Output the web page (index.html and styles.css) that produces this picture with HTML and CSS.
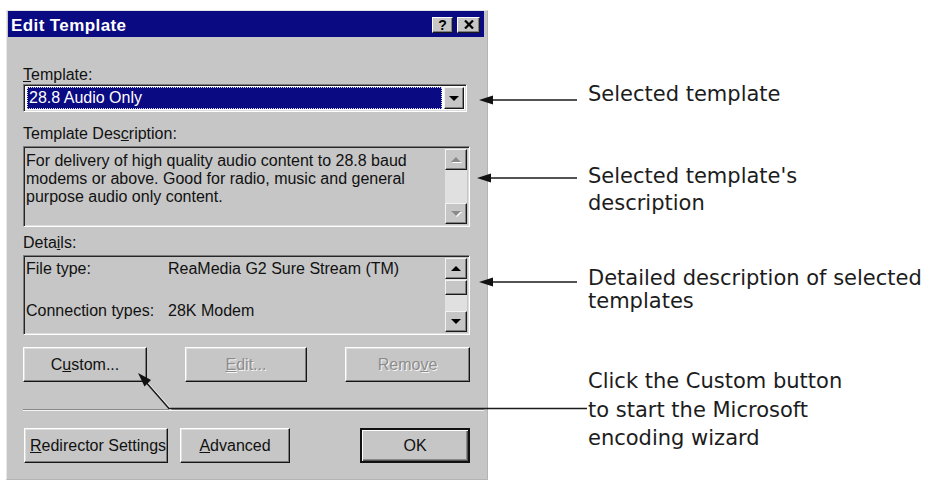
FILE: index.html
```html
<!DOCTYPE html>
<html>
<head>
<meta charset="utf-8">
<title>Edit Template</title>
<link rel="stylesheet" href="styles.css">
</head>
<body>
<div class="page">
  <div class="dialog">
    <div class="titlebar">
      <span class="title">Edit Template</span>
      <div class="tb-buttons">
        <span class="tb-btn help">?</span>
        <span class="tb-btn close"><svg width="10" height="9" viewBox="0 0 10 9"><path d="M1 0.5 L9 8.5 M9 0.5 L1 8.5" stroke="#000" stroke-width="2.2" fill="none"/></svg></span>
      </div>
    </div>
    <div class="content">
      <div class="label lbl-template"><u>T</u>emplate:</div>
      <div class="combo">
        <div class="combo-sel">28.8 Audio Only</div>
        <div class="sb-btn combo-btn"><svg width="10" height="5" viewBox="0 0 10 5"><path d="M0 0 H10 L5 5Z" fill="#000"/></svg></div>
      </div>
      <div class="label lbl-desc">Template Des<u>c</u>ription:</div>
      <div class="box box-desc">
        <div class="box-text">For delivery of high quality audio content to 28.8 baud<br>modems or above. Good for radio, music and general<br>purpose audio only content.</div>
        <div class="scrollbar">
          <div class="sb-btn sb-up disabled"><svg width="10" height="5" viewBox="0 0 10 5"><path d="M0 5 L5 0 L10 5Z"/></svg></div>
          <div class="sb-track"></div>
          <div class="sb-btn sb-down disabled"><svg width="10" height="5" viewBox="0 0 10 5"><path d="M0 0 H10 L5 5Z"/></svg></div>
        </div>
      </div>
      <div class="label lbl-details">Deta<u>i</u>ls:</div>
      <div class="box box-details">
        <div class="details">
          <div class="drow"><span class="dkey">File type:</span><span class="dval">ReaMedia G2 Sure Stream (TM)</span></div>
          <div class="drow"><span class="dkey">Connection types:</span><span class="dval">28K Modem</span></div>
        </div>
        <div class="scrollbar">
          <div class="sb-btn sb-up"><svg width="10" height="5" viewBox="0 0 10 5"><path d="M0 5 L5 0 L10 5Z"/></svg></div>
          <div class="sb-thumb"></div>
          <div class="sb-track"></div>
          <div class="sb-btn sb-down"><svg width="10" height="5" viewBox="0 0 10 5"><path d="M0 0 H10 L5 5Z"/></svg></div>
        </div>
      </div>
      <div class="btn-row row-top">
        <div class="btn btn-custom">C<u>u</u>stom...</div>
        <div class="btn btn-edit is-disabled"><u>E</u>dit...</div>
        <div class="btn btn-remove is-disabled">Remo<u>v</u>e</div>
      </div>
      <div class="separator"></div>
      <div class="btn-row row-bottom">
        <div class="btn btn-redirector"><u>R</u>edirector Settings</div>
        <div class="btn btn-advanced"><u>A</u>dvanced</div>
        <div class="btn btn-ok">OK</div>
      </div>
    </div>
  </div>

  <div class="notes">
    <div class="note note-1">Selected template</div>
    <div class="note note-2">Selected template's<br>description</div>
    <div class="note note-3">Detailed description of selected<br>templates</div>
    <div class="note note-4">Click the Custom button<br>to start the Microsoft<br>encoding wizard</div>
  </div>

  <svg class="overlay" width="934" height="481" viewBox="0 0 934 481">
    <g stroke="#1a1a1a" stroke-width="1.6" fill="none">
      <path d="M488 100 H577"/>
      <path d="M486 178 H577"/>
      <path d="M488 282 H577"/>
    </g>
    <g fill="#111">
      <path d="M479 100 L493 95.5 L493 104.5Z"/>
      <path d="M477 178 L491 173.5 L491 182.5Z"/>
      <path d="M479 282 L493 277.5 L493 286.5Z"/>
    </g>
    <path d="M147 383 L171 410" stroke="#fff" stroke-width="2" fill="none"/>
    <path d="M144 380 L169 408.5 H587" stroke="#1a1a1a" stroke-width="1.6" fill="none"/>
    <path d="M138 373 L151 380 L144.5 386.5Z" fill="#111"/>
  </svg>
</div>
</body>
</html>
```

FILE: styles.css
```css
html, body {
  margin: 0;
  padding: 0;
  background: #ffffff;
}

.page {
  position: relative;
  width: 934px;
  height: 481px;
  overflow: hidden;
  display: flex;
  align-items: flex-start;
  font-family: "Liberation Sans", Arial, sans-serif;
}

/* ---------- dialog ---------- */
.dialog {
  margin: 10px 0 0 6px;
  width: 482px;
  height: 470px;
  box-sizing: border-box;
  background: #c6c6c6;
  border: 1px solid;
  border-color: #e6e6e6 #b4b4b4 #b4b4b4 #e6e6e6;
  padding: 0 3px 0 1px;
  display: flex;
  flex-direction: column;
  font-size: 16px;
  color: #111;
}

.titlebar {
  height: 26px;
  background: #0a0a82;
  display: flex;
  align-items: center;
  justify-content: space-between;
  padding: 0 4px 0 3px;
}

.title {
  color: #ffffff;
  font-weight: bold;
  font-size: 17px;
  margin-top: 4px;
  letter-spacing: 0.4px;
}

.tb-buttons {
  display: flex;
  gap: 4px;
  margin-top: 1px;
}

.tb-btn {
  width: 21px;
  height: 16px;
  box-sizing: border-box;
  background: #c6c6c6;
  border: 1px solid;
  border-color: #ffffff #1a1a1a #1a1a1a #ffffff;
  box-shadow: inset -1px -1px #808080;
  display: flex;
  align-items: center;
  justify-content: center;
}

.tb-btn.close {
  width: 23px;
}

.help {
  font-weight: bold;
  font-size: 14px;
  line-height: 14px;
  color: #000;
}

.content {
  padding: 0 14px 0 15px;
  display: flex;
  flex-direction: column;
}

.label {
  line-height: 18px;
  height: 18px;
  white-space: nowrap;
}

.lbl-template { margin-top: 29px; }
.lbl-desc { margin-top: 13px; }
.lbl-details { margin-top: 7px; }

/* ---------- combo ---------- */
.combo {
  width: 444px;
  height: 28px;
  box-sizing: border-box;
  border: 1px solid;
  border-color: #7c7c7c #ffffff #ffffff #7c7c7c;
  box-shadow: inset 1px 1px #222, inset -1px -1px #dcdcdc;
  background: #ffffff;
  padding: 2px 2px 2px 3px;
  display: flex;
  gap: 2px;
}

.combo-sel {
  flex: 1;
  background: #0a0a82;
  color: #ffffff;
  border: 1px dotted #d8d8ff;
  line-height: 20px;
  padding-left: 1px;
  white-space: nowrap;
}

.combo-btn {
  width: 20px;
  height: 22px;
}

/* ---------- boxes ---------- */
.box {
  width: 447px;
  box-sizing: border-box;
  border: 1px solid;
  border-color: #7c7c7c #ffffff #ffffff #7c7c7c;
  box-shadow: inset 1px 1px #262626, inset -1px -1px #dcdcdc;
  padding: 2px;
  display: flex;
  margin-top: 3px;
}

.box-desc { height: 81px; }
.box-details { height: 80px; }

.box-text {
  flex: 1;
  line-height: 18px;
  padding: 3px 0 0 0;
  white-space: nowrap;
}

.details {
  flex: 1;
  padding-top: 2px;
}

.drow {
  display: flex;
  height: 42px;
  line-height: 18px;
  white-space: nowrap;
}

.dkey {
  width: 142px;
  flex: none;
}

/* ---------- scrollbars ---------- */
.scrollbar {
  width: 22px;
  display: flex;
  flex-direction: column;
  background: #e0e0e0;
}

.sb-btn {
  box-sizing: border-box;
  background: #c6c6c6;
  border: 1px solid;
  border-color: #f2f2f2 #1a1a1a #1a1a1a #f2f2f2;
  box-shadow: inset -1px -1px #808080;
  display: flex;
  align-items: center;
  justify-content: center;
  flex: none;
}

.scrollbar .sb-btn {
  height: 21px;
}

.sb-btn svg path {
  fill: #000;
}

.sb-btn.disabled svg {
  filter: drop-shadow(1px 1px 0 #ffffff);
}

.sb-btn.disabled svg path {
  fill: #8a8a8a;
}

.sb-thumb {
  height: 15px;
  box-sizing: border-box;
  background: #c6c6c6;
  border: 1px solid;
  border-color: #f2f2f2 #1a1a1a #1a1a1a #f2f2f2;
  box-shadow: inset -1px -1px #808080;
  margin-top: 1px;
}

.sb-track {
  flex: 1;
}

/* ---------- buttons ---------- */
.btn-row {
  display: flex;
  height: 35px;
}

.row-top {
  margin-top: 12px;
  justify-content: space-between;
}

.row-bottom {
  margin-top: 17px;
  gap: 12px;
}

.btn {
  height: 35px;
  box-sizing: border-box;
  background: #c6c6c6;
  border: 1px solid;
  border-color: #ffffff #141414 #141414 #ffffff;
  box-shadow: inset -1px -1px #7c7c7c, inset 1px 1px #dedede;
  display: flex;
  align-items: center;
  justify-content: center;
  white-space: nowrap;
  overflow: hidden;
}

.btn-custom { width: 124px; }
.btn-edit { width: 122px; }
.btn-remove { width: 125px; }

.btn-redirector { width: 144px; margin-left: 1px; justify-content: flex-start; padding-left: 5px; }
.btn-advanced { width: 110px; }
.btn-ok {
  width: 110px;
  margin-left: auto;
  border: 2px solid #111;
  box-shadow: inset 1px 1px #ffffff, inset -1px -1px #555, inset -2px -2px #8a8a8a;
}

.is-disabled {
  color: #8c8c8c;
  text-shadow: 1px 1px 0 #f6f6f6;
}

.separator {
  margin-top: 27px;
  margin-right: -14px;
  height: 1px;
  background: #8a8a8a;
  border-bottom: 1px solid #f4f4f4;
}

/* ---------- annotations ---------- */
.notes {
  margin-left: 100px;
  display: flex;
  flex-direction: column;
  font-family: "DejaVu Sans", Verdana, sans-serif;
  font-size: 21px;
  color: #1c1c1c;
  white-space: nowrap;
}

.note-1 { margin-top: 82px; line-height: 24px; }
.note-2 { margin-top: 57px; line-height: 27px; }
.note-3 { margin-top: 50px; line-height: 22.5px; }
.note-4 { margin-top: 55px; line-height: 28.5px; }

.overlay {
  position: absolute;
  top: 0;
  left: 0;
  pointer-events: none;
}
```
